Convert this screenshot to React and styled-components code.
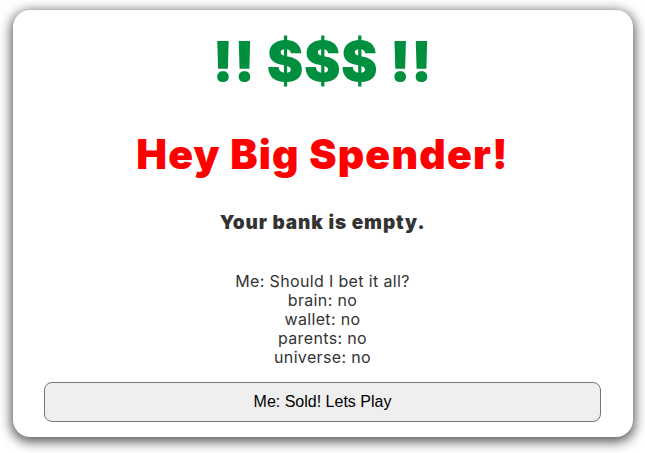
import React from 'react';
import styled, { createGlobalStyle } from 'styled-components';

const GlobalStyle = createGlobalStyle`
  body {
    margin: 0;
    background: #fff;
    font-family: Inter, "Open Sans", sans-serif;
  }
`;

const Card = styled.div`
  margin: 10px 12px 16px 13px;
  height: 427px;
  box-sizing: border-box;
  background: #fff;
  border-radius: 17px;
  box-shadow: 0 3px 12px 2px rgba(0, 0, 0, 0.65);
  padding: 24px 32px 15px 31px;
  display: flex;
  flex-direction: column;
  align-items: center;
  text-align: center;
`;

const Heading = styled.div`
  margin: ${(p) => p.$mt}px 0 0;
  font-size: ${(p) => p.$size}px;
  line-height: 1;
  font-weight: ${(p) => p.$weight || 900};
  color: ${(p) => p.$color};
  letter-spacing: ${(p) => p.$ls || 0}px;
`;

const Lines = styled.p`
  margin: 40px 0 0;
  font-size: 16px;
  line-height: 19px;
  letter-spacing: 0.35px;
  color: #333;
`;

const PlayButton = styled.button`
  margin-top: auto;
  align-self: stretch;
  height: 40px;
  background: #efefef;
  border: 1px solid #767676;
  border-radius: 8px;
  font-family: "Liberation Sans", Arial, sans-serif;
  font-size: 16px;
  color: #000;
  cursor: pointer;
`;

const replies = ['brain', 'wallet', 'parents', 'universe'];

const App = () => (
  <>
    <GlobalStyle />
    <Card>
      <Heading $mt={0} $size={55} $ls={0.5} $color="#008f3e">!! $$$ !!</Heading>
      <Heading $mt={45} $size={41} $ls={1.2} $color="#ff0000">Hey Big Spender!</Heading>
      <Heading $mt={38} $size={19} $ls={0.9} $weight={900} $color="#333">Your bank is empty.</Heading>
      <Lines>
        Me: Should I bet it all?
        {replies.map((who) => (
          <React.Fragment key={who}>
            <br />
            {who}: no
          </React.Fragment>
        ))}
      </Lines>
      <PlayButton>Me: Sold! Lets Play</PlayButton>
    </Card>
  </>
);

export default App;
